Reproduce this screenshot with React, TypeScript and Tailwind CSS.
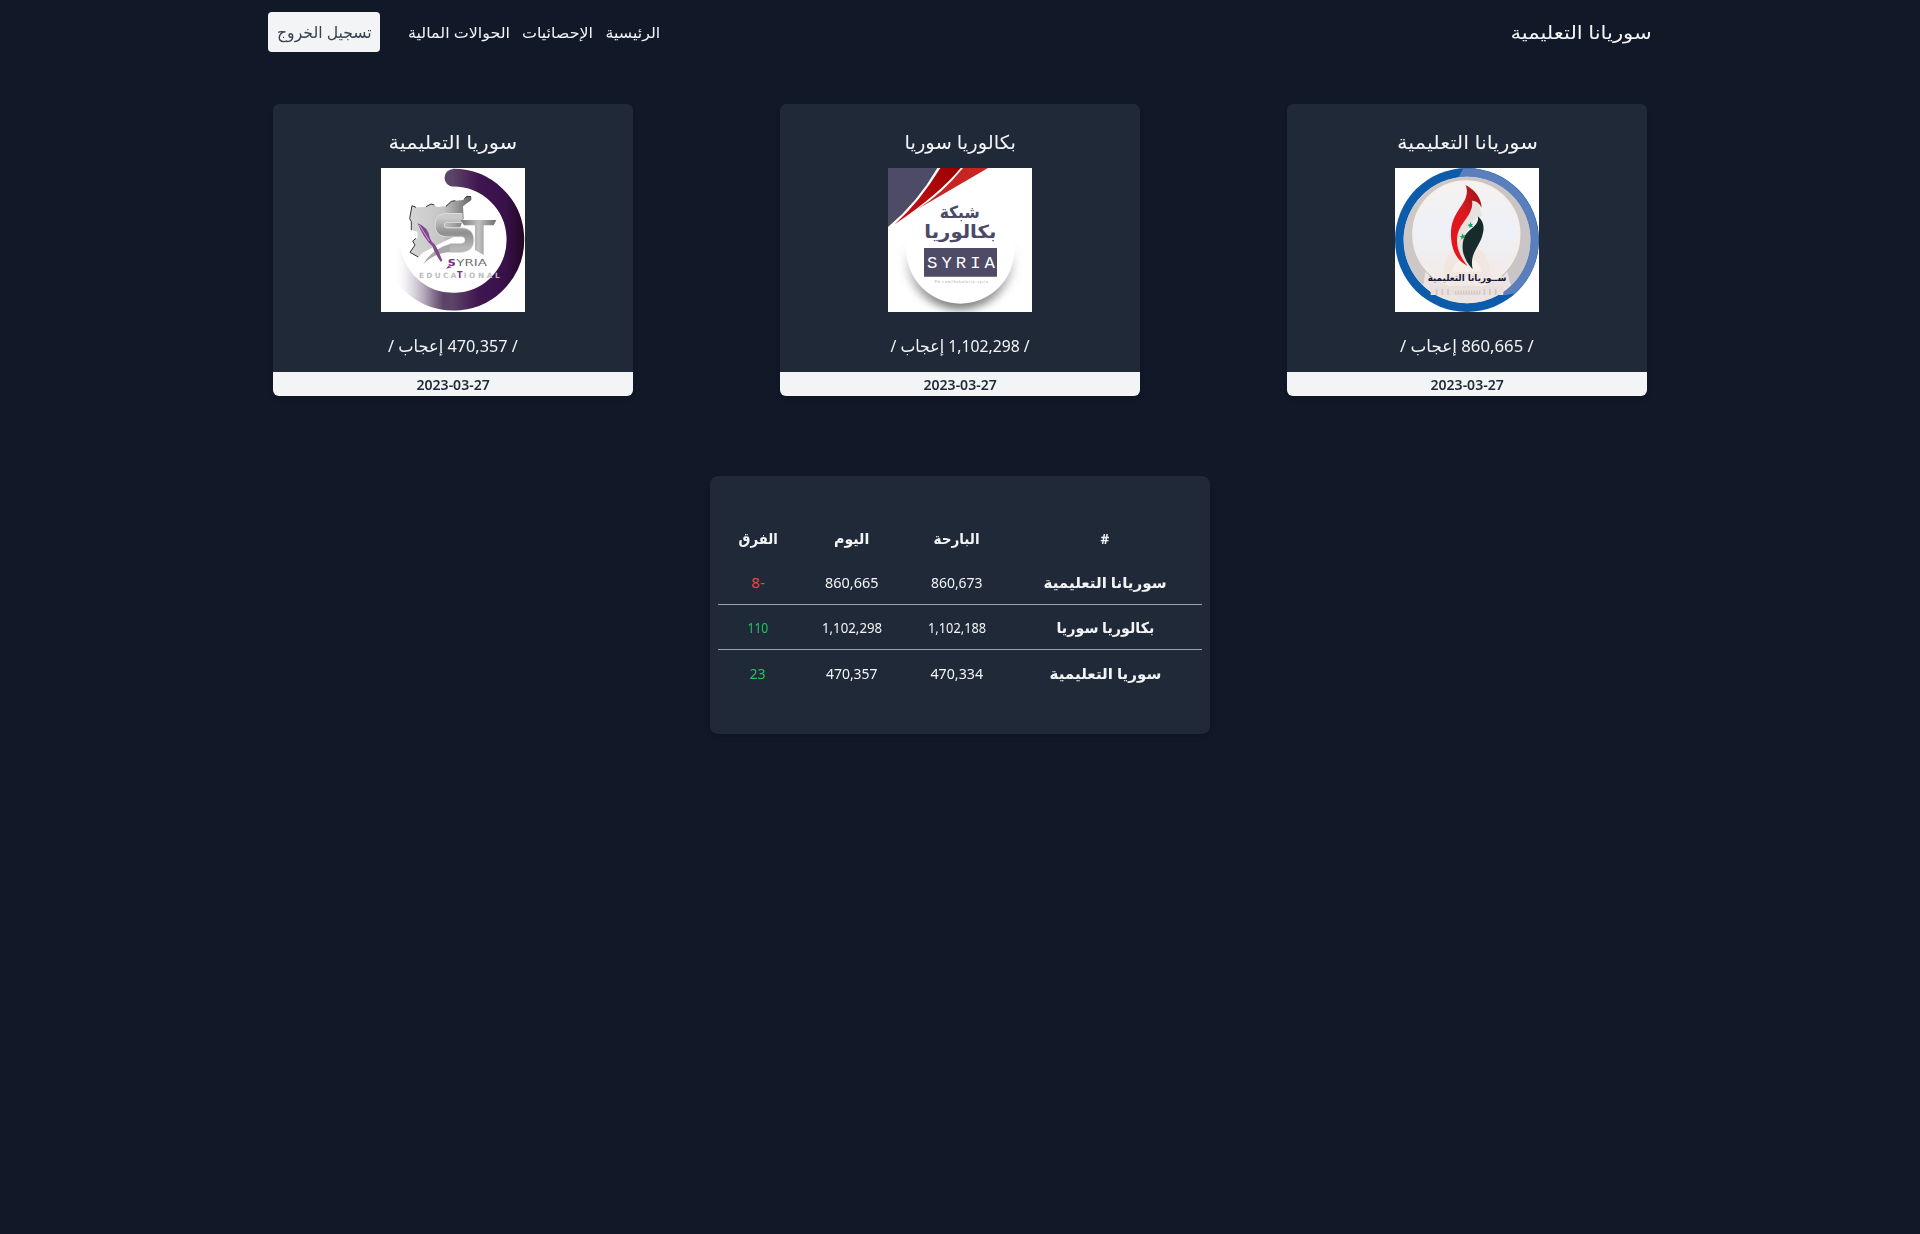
import { useLayoutEffect, useRef, type ReactNode } from "react";

/** One line of text condensed horizontally so that it fills a fixed width. */
function FitText({ width, className = "", children }: { width: number; className?: string; children: ReactNode }) {
  const ref = useRef<HTMLSpanElement>(null);
  useLayoutEffect(() => {
    const el = ref.current;
    if (el && el.offsetWidth > 0) el.style.transform = `scaleX(${width / el.offsetWidth})`;
  }, [width]);
  return (
    <span className="inline-flex justify-center whitespace-nowrap" style={{ width }}>
      <span ref={ref} className={`inline-block shrink-0 ${className}`}>
        {children}
      </span>
    </span>
  );
}

function SouryanaLogo() {
  return (
    <svg viewBox="33 39 432 432" className="size-36 bg-white">
      <defs>
        <linearGradient id="sky" x1="0" y1="0" x2="0" y2="1">
          <stop offset="0" stopColor="#f6f2ef" />
          <stop offset=".45" stopColor="#eef1f8" />
          <stop offset="1" stopColor="#f3e9e4" />
        </linearGradient>
        <linearGradient id="flameRed" x1="0" y1="1" x2="1" y2="0">
          <stop offset="0" stopColor="#e8131b" />
          <stop offset=".55" stopColor="#dd1820" />
          <stop offset="1" stopColor="#8e141b" />
        </linearGradient>
      </defs>
      <circle cx="249" cy="255" r="216" fill="#0d5cab" />
      <path d="M238 40A216 216 0 0 1 394 415L362 421Q330 400 300 350L224 66Z" fill="#5b7ebd" />
      <circle cx="249" cy="255" r="190" fill="#e2dfe0" />
      <path d="M249 65A190 190 0 0 1 383 390L330 340L249 90Z" fill="#c9c5c6" />
      <path d="M249 65A190 190 0 0 0 115 390L170 340L249 90Z" fill="#ccc8c8" />
      <circle cx="247" cy="238" r="160" fill="url(#sky)" stroke="#f7efe6" strokeWidth="5" />
      <path d="M124 350A160 160 0 0 0 370 350L380 392A190 190 0 0 1 118 392Z" fill="#ebe4e2" />
      <path d="M178 366Q174 282 249 266Q322 284 319 366Z" fill="#f1e6e0" />
      <path d="M205 350Q210 312 249 306Q285 312 292 350Z" fill="#f8efe8" />
      <path d="M140 392H358V420H140Z" fill="#eadfdb" />
      <path d="M158 402v18M175 402v18M192 402v18M301 402v18M318 402v18M335 402v18" stroke="#cfc7c5" strokeWidth="5" />
      <path d="M213 413h77" stroke="#cfc7c5" strokeWidth="12" strokeDasharray="4 4" />
      <path d="M264 137Q287 138 294 184Q270 185 247 230Q228 270 263 340Q215 300 214 255Q216 215 249 184Q262 168 264 137Z" fill="#e6e3df" />
      <path d="M245 90Q256 117 235 148C210 185 199 205 201 247C204 296 225 319 251 333C230 307 213 277 221 237C231 198 271 177 264 137Q281 136 293 158Q290 115 245 90Z" fill="url(#flameRed)" />
      <path d="M282 184Q304 204 297 233C289 276 255 292 266 343C239 313 230 284 239 251C249 220 286 216 282 184Z" fill="#172b2d" />
      <path d="m259 201 3 6 6-1-4 5 3 6-6-2-5 5v-7l-6-3 7-2zM235 235l3 6 6-1-4 5 3 6-6-2-5 5v-7l-6-3 7-2z" fill="#16a35a" />
      <text x="249" y="379" textAnchor="middle" textLength="236" lengthAdjust="spacingAndGlyphs" direction="rtl" className="font-['DejaVu_Sans',sans-serif] text-[28px] font-bold" fill="#17193d">
        ســوريانا التعليمية
      </text>
    </svg>
  );
}

function BaccalaureateLogo() {
  return (
    <svg viewBox="33 39 432 432" className="size-36 bg-white">
      <defs>
        <linearGradient id="discShade" x1="0" y1="0" x2="0" y2="1">
          <stop offset=".45" stopColor="#777" stopOpacity="0" />
          <stop offset="1" stopColor="#666" stopOpacity=".95" />
        </linearGradient>
        <linearGradient id="ribbon" x1="0" y1="1" x2="1" y2="0">
          <stop offset="0" stopColor="#cf1419" />
          <stop offset="1" stopColor="#990000" />
        </linearGradient>
        <filter id="discBlur" x="-20%" y="-20%" width="140%" height="140%">
          <feGaussianBlur stdDeviation="12" />
        </filter>
      </defs>
      <circle cx="249" cy="295" r="168" fill="url(#discShade)" filter="url(#discBlur)" />
      <circle cx="250" cy="284" r="162" fill="#fff" />
      <path d="M33 39H181Q121 143 33 216Z" fill="#4d4b65" />
      <path d="M190 39H251Q186 118 53 208Q128 141 190 39Z" fill="url(#ribbon)" />
      <path d="M258 39H333L122 162Q197 115 258 39Z" fill="#c92424" />
      <g fill="#4b4967" className="font-['DejaVu_Sans',sans-serif] font-bold">
        <text x="248" y="190" textAnchor="middle" direction="rtl" textLength="120" lengthAdjust="spacingAndGlyphs" className="text-[50px]">شبكة</text>
        <text x="250" y="249" textAnchor="middle" direction="rtl" textLength="216" lengthAdjust="spacingAndGlyphs" className="text-[54px]">بكالوريا</text>
      </g>
      <path d="M141 279H360V365H141Z" fill="#4d4b65" />
      <text x="150" y="339" direction="ltr" textLength="204" lengthAdjust="spacing" fill="#fff" className="font-['Liberation_Mono',monospace] text-[52px]">SYRIA</text>
      <text x="173" y="384" direction="ltr" textLength="160" fill="#aaa" className="font-['Liberation_Sans',sans-serif] text-[11px]">Fb.com/bakaloria.syria</text>
    </svg>
  );
}

function SyriaEducationalLogo() {
  return (
    <svg viewBox="33 39 432 432" className="size-36 bg-white">
      <defs>
        <linearGradient id="ring" gradientUnits="userSpaceOnUse" x1="70" y1="0" x2="462" y2="0">
          <stop offset="0" stopColor="#fff" stopOpacity="0" />
          <stop offset=".12" stopColor="#d9d2db" stopOpacity=".6" />
          <stop offset=".3" stopColor="#8b7893" />
          <stop offset=".38" stopColor="#5c4468" />
          <stop offset=".45" stopColor="#5c4468" />
          <stop offset=".65" stopColor="#411650" />
          <stop offset=".85" stopColor="#39114a" />
          <stop offset="1" stopColor="#240724" />
        </linearGradient>
        <linearGradient id="map" x1="0" y1="0" x2="1" y2="0">
          <stop offset="0" stopColor="#d6d6d6" />
          <stop offset=".55" stopColor="#c4c4c4" />
          <stop offset="1" stopColor="#666" />
        </linearGradient>
        <linearGradient id="steel" x1="0" y1="0" x2="0" y2="1">
          <stop offset="0" stopColor="#c9c9c9" />
          <stop offset=".5" stopColor="#8f8f8f" />
          <stop offset="1" stopColor="#b8b8b8" />
        </linearGradient>
        <linearGradient id="steelBar" x1="0" y1="0" x2="1" y2="0">
          <stop offset="0" stopColor="#777" />
          <stop offset=".5" stopColor="#c2c2c2" />
          <stop offset="1" stopColor="#6d6d6d" />
        </linearGradient>
      </defs>
      <path d="M249 68A186 186 0 1 1 66 280" fill="none" stroke="url(#ring)" strokeWidth="53" />
      <path d="M250 42A26.500 26.500 0 0 0 250 95Z" fill="#5c4468" />
      <path d="M126 152 138 157 166 156 183 147 202 156 226 154 244 139 279 135 291 123 304 125 304 135 279 154 281 190 262 240 218 262 160 292 145 306 120 292 135 270 128 258 143 248 142 230 124 226 125 200 119 191Z" fill="url(#map)" />
      <path d="M124 225V200L119 191 126 152 138 157M168 155 183 147 193 150M228 154 244 139 256 137M283 131 291 124 303 125M145 306 120 292 135 270 128 258 138 250" fill="none" stroke="#333" strokeWidth="3" />
      <path d="M277 189H230Q209 190 209 210Q209 231 232 232H275Q298 233 298 256Q298 278 270 279H240" fill="none" stroke="#e2e2e2" strokeWidth="30" />
      <path d="M277 189H230Q209 190 209 210Q209 231 232 232H275Q298 233 298 256Q298 278 270 279H240" fill="none" stroke="url(#steel)" strokeWidth="25" />
      <path d="M160 327Q186 282 240 267V291Q195 293 160 327Z" fill="#a7a7a7" />
      <path d="M272 195H379L371 211H341V300L315 285V211H282Z" fill="url(#steelBar)" />
      <path d="M143 205Q174 215 180 250Q185 263 193 267Q204 282 217 317L212 320Q193 292 187 273Q160 250 143 205Z" fill="#80478f" />
      <path d="M148 210 178 258" stroke="#c9a8d1" strokeWidth="3" />
      <g direction="ltr" className="font-['DejaVu_Sans',sans-serif]">
        <text x="233" y="333" className="text-[28px] font-bold" fill="#7a2a8b" textLength="24" lengthAdjust="spacingAndGlyphs">S</text>
        <path d="M235 333 228 341 246 337Z" fill="#7a2a8b" />
        <text x="259" y="333" className="text-[24px]" fill="#6e6e6e" textLength="92" lengthAdjust="spacingAndGlyphs">YRIA</text>
        <text x="147" y="370" className="text-[22px] font-bold" fill="#bdbdbd" textLength="112" lengthAdjust="spacing">EDUCA</text>
        <text x="261" y="370" className="text-[24px] font-bold" fill="#7a2a8b">T</text>
        <text x="281" y="370" className="text-[22px] font-bold" fill="#bdbdbd" textLength="108" lengthAdjust="spacing">IONAL</text>
      </g>
    </svg>
  );
}

const pages = [
  { name: "سوريانا التعليمية", nameWidth: 141, likes: "860,665", likesWidth: 134, logo: <SouryanaLogo /> },
  { name: "بكالوريا سوريا", nameWidth: 111, likes: "1,102,298", likesWidth: 139, logo: <BaccalaureateLogo /> },
  { name: "سوريا التعليمية", nameWidth: 129, likes: "470,357", likesWidth: 130, logo: <SyriaEducationalLogo /> },
];

const links = [
  { label: "الرئيسية", width: 55 },
  { label: "الإحصائيات", width: 71 },
  { label: "الحوالات المالية", width: 102 },
];

const headings = [
  { label: "#", width: 9 },
  { label: "البارحة", width: 46 },
  { label: "اليوم", width: 35 },
  { label: "الفرق", width: 39 },
];

const rows = [
  { name: "سوريانا التعليمية", nameWidth: 123, before: "860,673", today: "860,665", diff: "8-", up: false, w: [52, 54, 13] },
  { name: "بكالوريا سوريا", nameWidth: 98, before: "1,102,188", today: "1,102,298", diff: "110", up: true, w: [58, 60, 21] },
  { name: "سوريا التعليمية", nameWidth: 112, before: "470,334", today: "470,357", diff: "23", up: true, w: [53, 52, 16] },
];

export default function App() {
  return (
    <div dir="rtl" className="min-h-screen bg-[#111827] font-['Noto_Sans','DejaVu_Sans',sans-serif] text-[#f3f4f6]">
      <nav className="mx-auto flex h-16 w-[1384px] items-center justify-between">
        <a className="text-[18px] leading-7"><FitText width={141}>سوريانا التعليمية</FitText></a>
        <div className="flex items-center">
          <div className="flex gap-3 text-[15px] leading-6">
            {links.map((l) => (
              <a key={l.label}><FitText width={l.width}>{l.label}</FitText></a>
            ))}
          </div>
          <button className="ms-7 h-10 w-28 rounded bg-[#f3f4f6] text-[16px] leading-6 text-[#374151]">
            <FitText width={95}>تسجيل الخروج</FitText>
          </button>
        </div>
      </nav>

      <main>
        <section className="mx-auto mt-10 flex w-[1374px] justify-between">
          {pages.map((p) => (
            <article key={p.name} className="flex h-[292px] w-[360px] flex-col items-center overflow-hidden rounded-md bg-[#1f2937] shadow-md">
              <h2 className="mt-6 h-10 text-[19px] leading-7"><FitText width={p.nameWidth}>{p.name}</FitText></h2>
              {p.logo}
              <p className="mt-5 text-[17px] leading-7"><FitText width={p.likesWidth}>/ {p.likes} إعجاب /</FitText></p>
              <div className="mt-auto h-6 w-full bg-[#f3f4f6] text-center text-[15px] leading-6 font-semibold text-[#1f2937]">
                <bdi dir="ltr"><FitText width={73}>2023-03-27</FitText></bdi>
              </div>
            </article>
          ))}
        </section>

        <section className="mx-auto mt-20 h-[258px] w-[500px] rounded-lg bg-[#1f2937] px-2 pt-10 shadow-md">
          <div className="grid h-11 grid-cols-[194px_102px_108px_80px] place-items-center text-[15px] leading-6 font-bold">
            {headings.map((h) => (
              <FitText key={h.label} width={h.width}>{h.label}</FitText>
            ))}
          </div>
          <div className="divide-y divide-[#9ca3af] text-[15px] leading-6">
            {rows.map((r) => (
              <div key={r.name} className="grid h-[45px] grid-cols-[194px_102px_108px_80px] place-items-center">
                <FitText width={r.nameWidth} className="font-bold">{r.name}</FitText>
                <FitText width={r.w[0]}>{r.before}</FitText>
                <FitText width={r.w[1]}>{r.today}</FitText>
                <span dir="ltr" className={r.up ? "text-[#22c55e]" : "text-[#ef4444]"}>
                  <FitText width={r.w[2]}>{r.diff}</FitText>
                </span>
              </div>
            ))}
          </div>
        </section>
      </main>
    </div>
  );
}
